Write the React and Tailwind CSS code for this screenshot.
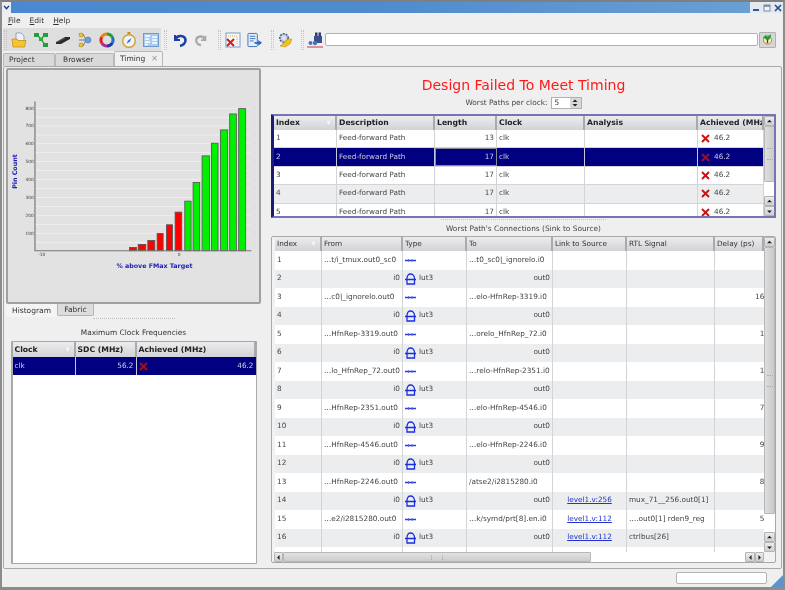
const TOP_COLS = 'grid-cols-[63px_98px_62px_88px_113px_66px]';
const BOT_COLS = 'grid-cols-[47px_81px_64px_86px_74px_88px_49px]';
const LEFT_COLS = 'grid-cols-[63px_61px_119px]';

const WORST = [
  ['1', '13'],
  ['2', '17'],
  ['3', '17'],
  ['4', '17'],
  ['5', '17'],
];

const LINKS = [
  ['1', '…t/i_tmux.out0_sc0', '…t0_sc0|_ignorelo.i0', '', '', ''],
  ['3', '…c0|_ignorelo.out0', '…elo-HfnRep-3319.i0', '', '', '164'],
  ['5', '…HfnRep-3319.out0', '…orelo_HfnRep_72.i0', '', '', '19'],
  ['7', '…lo_HfnRep_72.out0', '…relo-HfnRep-2351.i0', '', '', '13'],
  ['9', '…HfnRep-2351.out0', '…elo-HfnRep-4546.i0', '', '', '78'],
  ['11', '…HfnRep-4546.out0', '…elo-HfnRep-2246.i0', '', '', '95'],
  ['13', '…HfnRep-2246.out0', '/atse2/i2815280.i0', '', '', '83'],
  ['15', '…e2/i2815280.out0', '…k/symd/prt[8].en.i0', 'level1.v:112', '….out0[1]   rden9_reg', '52'],
];

const EVEN_EXTRA = {
  14: ['level1.v:256', 'mux_71__256.out0[1]'],
  16: ['level1.v:112', 'ctrlbus[26]'],
};

const BARS = [
  [389, 410, 548, 'r'], [415, 438, 539, 'r'], [444, 465, 527, 'r'], [472, 490, 506, 'r'],
  [500, 518, 480, 'r'], [526, 546, 442, 'r'], [555, 574, 409, 'g'], [580, 600, 353, 'g'],
  [607, 629, 273, 'g'], [635, 655, 235, 'g'], [662, 684, 195, 'g'], [690, 710, 147, 'g'], [717, 738, 131, 'g'],
];

const YTICKS = [['800', 130], ['700', 183], ['600', 236], ['500', 290], ['400', 344], ['300', 398], ['200', 452], ['100', 506]];

function CrossIcon({ className = 'text-[#d01010]' }) {
  return (
    <svg viewBox="0 0 9 9" className={`h-[9px] w-[9px] shrink-0 ${className}`}>
      <path d="M1 1 L8 8 M8 1 L1 8" stroke="currentColor" strokeWidth="1.9" />
    </svg>
  );
}

function WireIcon() {
  return (
    <svg viewBox="0 0 11 5" className="h-[5px] w-[11px] shrink-0">
      <path d="M0 2.5 H11" stroke="#2a3be0" strokeWidth="1.6" />
      <path d="M3.5 1 V4 M7 1 V4" stroke="#5060e8" strokeWidth="0.8" />
    </svg>
  );
}

function LutIcon() {
  return (
    <svg viewBox="0 0 11 12" className="h-[12px] w-[11px] shrink-0" fill="none">
      <path d="M2 11 H9.5 V5.5 C9.5 2.5 7.5 1 5.5 1 C3.5 1 2 2.5 2 5.5 Z" stroke="#1a2fe0" strokeWidth="1.3" />
      <path d="M0 6.5 H11" stroke="#1a2fe0" strokeWidth="1.3" />
    </svg>
  );
}

function Arrow({ dir, className = 'h-[10px] w-[11px]' }) {
  const d = { up: 'M1.5 6 L5 2.5 L8.5 6 Z', down: 'M1.5 3.5 L5 7 L8.5 3.5 Z', left: 'M6.5 1.5 L3 5 L6.5 8.5 Z', right: 'M3.5 1.5 L7 5 L3.5 8.5 Z' }[dir];
  return (
    <div className={`grid shrink-0 place-items-center rounded-[1px] border border-[#b4b4b4] bg-gradient-to-b from-[#ececec] to-[#cfcfcf] ${className}`}>
      <svg viewBox="0 0 10 10" className="h-[7px] w-[7px]"><path d={d} fill="#222" /></svg>
    </div>
  );
}

function VScroll({ thumb, space }) {
  return (
    <div className="flex w-[12px] shrink-0 flex-col bg-[#f4f4f4]">
      <Arrow dir="up" />
      <div className="flex w-[11px] items-center justify-center rounded-[1px] border border-[#b8b8b8] bg-gradient-to-r from-[#dedede] to-[#cacaca]" style={{ height: thumb }}>
        <div className="h-[12px] w-[6px] border-y border-dotted border-[#aaa]" />
      </div>
      <div className="bg-white" style={{ height: space }} />
      <Arrow dir="up" />
      <Arrow dir="down" />
    </div>
  );
}

function HeaderCell({ children, sort, bold }) {
  return (
    <div className={`flex h-full items-center justify-between overflow-hidden whitespace-nowrap border-r-2 border-[#a9aaad] bg-gradient-to-b from-[#ececee] to-[#d2d3d6] pl-[2px] ${bold ? 'text-[7.7px] font-bold text-[#222]' : 'text-[7.3px] text-[#333]'}`}>
      <span>{children}</span>
      {sort && (
        <svg viewBox="0 0 8 7" className="mr-[3px] h-[6px] w-[7px] shrink-0"><path d="M0 0 H8 L4 7 Z" fill="#f3f3f5" stroke="#c6c6ca" strokeWidth="0.5" /></svg>
      )}
    </div>
  );
}

function Cell({ children, right, selected, className = '' }) {
  return (
    <div className={`flex h-full items-center gap-[2px] overflow-hidden whitespace-nowrap border-r px-[2px] ${right ? 'justify-end' : ''} ${selected ? 'border-[#c8c8dc] text-[#ccccea]' : 'border-[#d3d4d7] text-[#444]'} ${className}`}>
      {children}
    </div>
  );
}

function TopTable() {
  return (
    <div className="flex h-[104px] w-[505px] overflow-hidden rounded-[1px] border-2 border-l-[3px] border-[#7575b5] border-l-[#1c1c78]">
      <div className="flex w-[490px] shrink-0 flex-col">
        <div className={`grid h-[14px] shrink-0 ${TOP_COLS}`}>
          <HeaderCell bold sort>Index</HeaderCell>
          <HeaderCell bold>Description</HeaderCell>
          <HeaderCell bold>Length</HeaderCell>
          <HeaderCell bold>Clock</HeaderCell>
          <HeaderCell bold>Analysis</HeaderCell>
          <HeaderCell bold>Achieved (MHz)</HeaderCell>
        </div>
        {WORST.map(([idx, len], i) => {
          const selected = idx === '2';
          return (
            <div key={idx} className={`grid h-[18.4px] shrink-0 border-b border-[#d3d4d7] text-[7.3px] ${TOP_COLS} ${selected ? 'bg-[#000080]' : i % 2 ? 'bg-[#ecedef]' : 'bg-white'}`}>
              <Cell selected={selected}>{idx}</Cell>
              <Cell selected={selected}>Feed-forward Path</Cell>
              <Cell right selected={selected} className={selected ? 'outline outline-1 -outline-offset-1 outline-[#8a8a9a]' : ''}>{len}</Cell>
              <Cell selected={selected}>clk</Cell>
              <Cell selected={selected} />
              <Cell selected={selected} className="gap-[4px] pl-[3px]">
                <CrossIcon className={selected ? 'text-[#a01020]' : 'text-[#d01010]'} />46.2
              </Cell>
            </div>
          );
        })}
      </div>
      <VScroll thumb={56} space={14} />
    </div>
  );
}

function BottomTable() {
  const rows = [];
  for (let n = 1; n <= 17; n++) {
    if (n % 2) {
      const r = LINKS[(n - 1) / 2];
      rows.push(
        <div key={n} className={`grid h-[18.5px] shrink-0 bg-white ${BOT_COLS}`}>
          <Cell>{r ? r[0] : ''}</Cell>
          <Cell>{r ? r[1] : ''}</Cell>
          <Cell>{r && <WireIcon />}</Cell>
          <Cell>{r ? r[2] : ''}</Cell>
          <Cell className="justify-center">{r && r[3] && <span className="text-[#2233cc] underline">{r[3]}</span>}</Cell>
          <Cell>{r ? r[4] : ''}</Cell>
          <Cell right className="border-r-0"><span className="-mr-[7px]">{r ? r[5] : ''}</span></Cell>
        </div>
      );
    } else {
      const extra = EVEN_EXTRA[n];
      rows.push(
        <div key={n} className={`grid h-[18.5px] shrink-0 bg-[#ecedef] ${BOT_COLS}`}>
          <Cell>{n}</Cell>
          <Cell right>i0</Cell>
          <Cell className="gap-[3px]"><LutIcon />lut3</Cell>
          <Cell right>out0</Cell>
          <Cell className="justify-center">{extra && <span className="text-[#2233cc] underline">{extra[0]}</span>}</Cell>
          <Cell>{extra ? extra[1] : ''}</Cell>
          <Cell right className="border-r-0" />
        </div>
      );
    }
  }
  return (
    <div className="flex h-[327px] w-[505px] flex-col overflow-hidden rounded-[2px] border border-[#a8a8a8] bg-[#f2f2f2] pl-[2px]">
      <div className="flex h-[315px] shrink-0">
        <div className="flex w-[490px] shrink-0 flex-col overflow-hidden pl-[1px]">
          <div className={`grid h-[14px] shrink-0 ${BOT_COLS}`}>
            <HeaderCell sort>Index</HeaderCell>
            <HeaderCell>From</HeaderCell>
            <HeaderCell>Type</HeaderCell>
            <HeaderCell>To</HeaderCell>
            <HeaderCell>Link to Source</HeaderCell>
            <HeaderCell>RTL Signal</HeaderCell>
            <HeaderCell>Delay (ps)</HeaderCell>
          </div>
          <div className="text-[7.3px]">{rows}</div>
        </div>
        <VScroll thumb={267} space={18} />
      </div>
      <div className="flex h-[10px] shrink-0 items-center">
        <Arrow dir="left" className="h-[10px] w-[9px]" />
        <div className="flex h-[10px] w-[308px] items-center justify-center rounded-[1px] border border-[#b8b8b8] bg-gradient-to-b from-[#e2e2e2] to-[#cdcdcd]">
          <div className="h-[5px] w-[12px] border-x border-dotted border-[#aaa]" />
        </div>
        <div className="h-[10px] w-[154px] bg-white" />
        <Arrow dir="left" className="h-[10px] w-[10px]" />
        <Arrow dir="right" className="h-[10px] w-[9px]" />
      </div>
    </div>
  );
}

function Histogram() {
  const ox = -24;
  const oy = 15;
  return (
    <svg viewBox="0 0 760 700" className="h-[233px] w-[253px]">
      {[130, 157, 183, 210, 236, 263, 290, 317, 344, 371, 398, 425, 452, 479, 506, 533].map((y) => (
        <path key={y} d={`M${105 + ox} ${y - oy} H${750 + ox}`} stroke="#eeeeee" strokeWidth="3" />
      ))}
      {BARS.map(([a, b, top, c]) => (
        <rect key={a} x={a + ox} y={top - oy} width={b - a} height={558 - top} fill={c === 'r' ? '#ff0000' : '#00f000'} stroke="#555" strokeWidth="2.5" />
      ))}
      <path d={`M${105 + ox} ${110 - oy} V${558 - oy} H${755 + ox}`} stroke="#777" strokeWidth="3.5" fill="none" />
      {YTICKS.map(([label, y]) => (
        <text key={label} x={101 + ox} y={y - oy + 4} textAnchor="end" fontSize="13" fill="#444" fontFamily="DejaVu Sans">{label}</text>
      ))}
      <text x={115 + ox} y={575 - oy} fontSize="13" fill="#444" fontFamily="DejaVu Sans">-10</text>
      <text x={534 + ox} y={575 - oy} fontSize="13" fill="#444" fontFamily="DejaVu Sans">0</text>
      <text x={464 + ox} y={609 - oy} fontSize="19" fontWeight="bold" textAnchor="middle" fill="#1c1cb0" fontFamily="DejaVu Sans">% above FMax Target</text>
      <text transform={`translate(${50 + ox} ${320 - oy}) rotate(-90)`} fontSize="19" fontWeight="bold" textAnchor="middle" fill="#1c1cb0" fontFamily="DejaVu Sans">Pin Count</text>
    </svg>
  );
}

function ToolIcon({ children, w = 16 }) {
  return <svg viewBox="0 0 16 16" style={{ width: w }} className="h-[16px] shrink-0">{children}</svg>;
}

function Grip({ className = 'mx-[3px]' }) {
  return <div className={`h-[20px] w-[3px] shrink-0 border-x border-dotted border-[#c4c4c4] ${className}`} />;
}

function Toolbar() {
  return (
    <div className="flex h-[23px] shrink-0 items-center pl-[1px] pr-[7px]">
      <div className="flex h-full items-center gap-[6px] bg-[#dedede] pr-[2px]">
        <Grip className="ml-[1px] -mr-[2px]" />
        <ToolIcon>
          <path d="M5 1 H10 L13 4 V9 H5 Z" fill="#eef2ff" stroke="#7a8ab0" strokeWidth="0.7" />
          <path d="M1 7 H6 L7 8.5 H15 L13.5 15 H2 Z" fill="#f6c331" stroke="#c08a10" strokeWidth="0.7" />
        </ToolIcon>
        <ToolIcon>
          <path d="M4 3 L8 7 L12 3 M8 7 L12 13" stroke="#2f7d32" strokeWidth="1.2" fill="none" />
          <rect x="1" y="1" width="5" height="4" fill="#1fa03a" />
          <rect x="10" y="1" width="5" height="4" fill="#1fa03a" />
          <rect x="6" y="6" width="4" height="3" fill="#23b040" />
          <rect x="10" y="11" width="5" height="4" fill="#1fa03a" />
        </ToolIcon>
        <ToolIcon>
          <path d="M1 10 L10 5 H15 V7 L6 12 H1 Z" fill="#2b2b2b" />
          <path d="M2 10 L10 6" stroke="#777" strokeWidth="0.6" />
        </ToolIcon>
        <ToolIcon>
          <path d="M2 2 H6 L9 8 H14 M2 8 H9 M2 14 H6 L9 8" stroke="#777" strokeWidth="1" fill="none" />
          <circle cx="4" cy="3" r="2" fill="#f2c230" stroke="#a07c10" strokeWidth="0.5" />
          <circle cx="4" cy="13" r="2" fill="#f2c230" stroke="#a07c10" strokeWidth="0.5" />
          <circle cx="11" cy="8" r="3" fill="#6c9fd8" stroke="#40689c" strokeWidth="0.5" />
        </ToolIcon>
        <ToolIcon>
          <g fill="none" strokeWidth="3">
            <path d="M8 2 A6 6 0 0 1 13.2 5" stroke="#1fa03a" />
            <path d="M13.2 5 A6 6 0 0 1 13.2 11" stroke="#1f6fc0" />
            <path d="M13.2 11 A6 6 0 0 1 8 14" stroke="#2233aa" />
            <path d="M8 14 A6 6 0 0 1 2.8 11" stroke="#a030a0" />
            <path d="M2.8 11 A6 6 0 0 1 2.8 5" stroke="#e02020" />
            <path d="M2.8 5 A6 6 0 0 1 8 2" stroke="#e08a10" />
          </g>
        </ToolIcon>
        <ToolIcon>
          <rect x="6.5" y="0" width="3" height="2" fill="#c09020" />
          <circle cx="8" cy="9" r="6.3" fill="#eef3fb" stroke="#d6a526" strokeWidth="1.5" />
          <path d="M10.5 6 L7 8.5 L5.5 12 L9 9.5 Z" fill="#3b78c4" />
        </ToolIcon>
        <ToolIcon>
          <rect x="0.5" y="1.5" width="15" height="13" fill="#a9cbef" stroke="#6d9bd0" />
          <path d="M2 4 H7 M2 7 H6 M2 10 H7 M2 12.5 H5 M9 5 H14 M9 8 H14 M9 11 H14" stroke="#fff" strokeWidth="1.3" />
        </ToolIcon>
      </div>
      <Grip />
      <div className="ml-[2px] flex items-center gap-[6px]">
        <ToolIcon>
          <path d="M3 3 V8 H8" stroke="#1c3fa8" strokeWidth="2" fill="none" />
          <path d="M3.5 7.5 C5 2.5 13 3 13.5 8 C13.8 11 11 13.5 8 14" stroke="#1c3fa8" strokeWidth="2.6" fill="none" />
        </ToolIcon>
        <ToolIcon w={14}>
          <path d="M13 3 V8 H8" stroke="#a8a8a8" strokeWidth="2" fill="none" />
          <path d="M12.5 7.5 C11 2.5 3 3 2.5 8 C2.2 11 5 13.5 8 14" stroke="#a8a8a8" strokeWidth="2.6" fill="none" />
        </ToolIcon>
      </div>
      <div className="w-[7px]" />
      <Grip />
      <div className="ml-[1px] flex items-center gap-[6px]">
        <ToolIcon>
          <rect x="1" y="1" width="14" height="14" fill="#f6f8fc" stroke="#7a9cc8" />
          <path d="M3 4 H13" stroke="#d8b030" strokeDasharray="1 1" />
          <path d="M12 5 V13" stroke="#d8b030" strokeDasharray="1 1" />
          <path d="M2 7 L9 14 M9 7 L2 14" stroke="#e01818" strokeWidth="2" />
        </ToolIcon>
        <ToolIcon w={15}>
          <rect x="1" y="1" width="10" height="14" rx="1" fill="#e6effa" stroke="#3a70b8" />
          <path d="M3 4 H9 M3 6.5 H9 M3 9 H7" stroke="#3a70b8" />
          <path d="M8 10 H12 V8 L16 11 L12 14 V12 H8 Z" fill="#2f68c0" />
        </ToolIcon>
      </div>
      <div className="w-[6px]" />
      <Grip />
      <ToolIcon>
        <circle cx="7" cy="6" r="4.2" fill="#c9d4e6" stroke="#4a5f86" strokeWidth="1.6" strokeDasharray="2 1" />
        <circle cx="7" cy="6" r="1.5" fill="#eef" />
        <path d="M3 14 L11 7 H15 L13 12 L8 15 Z" fill="#f4c21f" stroke="#b98a08" strokeWidth="0.5" />
      </ToolIcon>
      <div className="w-[5px]" />
      <Grip />
      <ToolIcon>
        <rect x="8" y="0.5" width="2.5" height="4" fill="#2c3f70" />
        <rect x="11.5" y="0.5" width="2.5" height="4" fill="#2c3f70" />
        <rect x="7" y="4" width="8" height="7" fill="#3b4f88" />
        <circle cx="3.5" cy="11" r="2" fill="#3a78c8" />
        <circle cx="8" cy="11" r="2.2" fill="#3a78c8" />
        <path d="M0 15 H16" stroke="#e07070" strokeWidth="1.5" />
      </ToolIcon>
      <input readOnly className="mb-[1px] ml-[2px] h-[13px] min-w-0 flex-1 rounded-[2px] border border-[#b0b0b0] bg-white outline-none" />
      <div className="ml-[1px] grid h-[16px] w-[17px] shrink-0 place-items-center rounded-[1px] border border-[#b0b0b0] bg-[#d6d6d6]">
        <svg viewBox="0 0 12 12" className="h-[11px] w-[11px]">
          <circle cx="6" cy="6.5" r="4.5" fill="#f4ecd0" stroke="#c09a30" strokeWidth="1.2" />
          <path d="M1 4 L4 1 L6 3 L10 0 L9 5 L6 7 L3 5 Z" fill="#20a030" />
          <path d="M6 6 V10" stroke="#444" strokeWidth="1.5" />
        </svg>
      </div>
    </div>
  );
}

function TitleBar() {
  return (
    <div className="flex h-[11px] shrink-0 items-stretch">
      <div className="grid w-[9px] place-items-center bg-[#e9eef5]">
        <svg viewBox="0 0 8 6" className="h-[5px] w-[7px]"><path d="M1 1 L4 4.5 L7 1" stroke="#16306c" strokeWidth="1.5" fill="none" /></svg>
      </div>
      <div className="flex-1 bg-gradient-to-r from-[#4a88d0] via-[#4f8bce] to-[#6a9fd3]" />
      <div className="flex w-[33px] items-center justify-around bg-[#e4e9f0]">
        <svg viewBox="0 0 8 8" className="h-[8px] w-[8px]"><path d="M1 6 H7" stroke="#2a5a9c" strokeWidth="2" /></svg>
        <svg viewBox="0 0 8 8" className="h-[8px] w-[8px]"><rect x="1" y="1" width="6" height="6" fill="#f2f4f7" stroke="#7a8ca4" /><path d="M1 2 H7" stroke="#5f7a9c" strokeWidth="1.4" /></svg>
        <svg viewBox="0 0 8 8" className="h-[8px] w-[8px]"><path d="M1 1 L7 7 M7 1 L1 7" stroke="#24508e" strokeWidth="1.7" /></svg>
      </div>
    </div>
  );
}

export default function App() {
  return (
    <div className="flex h-[590px] w-[785px] flex-col overflow-hidden border-x-2 border-t-2 border-b-[3px] border-x-[#8c8c8c] border-t-[#7f7f7f] border-b-[#8c8c8c] bg-[#efefef] font-['DejaVu_Sans',sans-serif] text-[#333] blur-[0.6px]">
      <TitleBar />

      {/* Menu */}
      <div className="flex h-[15px] shrink-0 items-center gap-[9px] pl-[6px] text-[7.5px] text-[#333]">
        <span><u>F</u>ile</span>
        <span><u>E</u>dit</span>
        <span><u>H</u>elp</span>
      </div>

      <Toolbar />

      {/* Tabs */}
      <div className="flex h-[15px] shrink-0 items-end pl-[1px] text-[7.5px]">
        <div className="flex h-[13px] w-[52px] items-center rounded-t-[2px] border border-b-0 border-[#b8b8b8] bg-[#d9d9d9] pl-[5px]">Project</div>
        <div className="flex h-[13px] w-[59px] items-center rounded-t-[2px] border border-b-0 border-[#b8b8b8] bg-[#d9d9d9] pl-[7px]">Browser</div>
        <div className="flex h-[15px] w-[49px] items-center gap-[6px] rounded-t-[2px] border border-b-0 border-[#b8b8b8] bg-[#f0f0f0] pl-[5px]">
          Timing
          <span className="text-[8px] leading-none text-[#999]">✕</span>
        </div>
      </div>

      {/* Tab pane */}
      <div className="mx-[1px] flex h-[503px] shrink-0 gap-[10px] rounded-[2px] border border-[#a8a8a8] pl-[2px] pt-[1px]">
        <div className="flex w-[255px] shrink-0 flex-col">
          <div className="h-[236px] shrink-0 rounded-[2px] border-2 border-[#a0a0a0] bg-[#e2e2e2]">
            <Histogram />
          </div>
          <div className="flex h-[13px] shrink-0 items-start text-[7.5px]">
            <div className="flex h-[13px] w-[51px] items-center justify-center rounded-b-[2px] bg-[#f4f4f4]">Histogram</div>
            <div className="flex h-[12px] w-[37px] items-center justify-center rounded-b-[2px] border border-t-0 border-[#b4b4b4] bg-[#dcdcdc]">Fabric</div>
          </div>
          <div className="flex h-[247px] shrink-0 flex-col items-center">
            <div className="mt-[1px] h-[1px] w-[82px] border-t border-dotted border-[#bdbdbd]" />
            <p className="mb-[2px] mt-[8px] text-[7.4px] leading-[12px] text-[#333]">Maximum Clock Frequencies</p>
            <div className="flex w-[246px] flex-1 flex-col rounded-[1px] border border-l-2 border-[#a8a8a8] bg-white">
              <div className={`grid h-[15px] shrink-0 ${LEFT_COLS}`}>
                <HeaderCell bold sort>Clock</HeaderCell>
                <HeaderCell bold>SDC (MHz)</HeaderCell>
                <HeaderCell bold>Achieved (MHz)</HeaderCell>
              </div>
              <div className={`grid h-[18px] shrink-0 bg-[#000080] text-[7.3px] ${LEFT_COLS}`}>
                <Cell selected>clk</Cell>
                <Cell selected right>56.2</Cell>
                <Cell selected className="justify-between border-r-0">
                  <CrossIcon className="text-[#a01020]" /><span>46.2</span>
                </Cell>
              </div>
            </div>
          </div>
        </div>

        <div className="flex w-[505px] flex-col">
          <h1 className="mt-[8px] h-[19px] text-center text-[14px] leading-[19px] text-[#ff1a1a]">Design Failed To Meet Timing</h1>
          <div className="mt-[1px] flex h-[13px] items-center justify-center gap-[3px] text-[7.4px] text-[#444]">
            <span>Worst Paths per clock:</span>
            <div className="flex h-[12px] w-[31px] items-stretch border border-[#b0b0b0] bg-white">
              <span className="flex-1 pl-[3px] leading-[10px]">5</span>
              <div className="flex w-[11px] flex-col justify-center bg-[#d8d8d8]">
                <svg viewBox="0 0 8 10" className="h-[10px] w-[10px]"><path d="M1.5 4 L4 1.5 L6.5 4 Z M1.5 6 L4 8.5 L6.5 6 Z" fill="#222" /></svg>
              </div>
            </div>
          </div>
          <div className="mt-[5px]"><TopTable /></div>
          <div className="mx-auto mt-[1px] h-[1px] w-[165px] border-t border-dotted border-[#c4c4c4]" />
          <p className="mt-[3px] h-[13px] text-center text-[7.4px] leading-[11px] text-[#444]">Worst Path's Connections (Sink to Source)</p>
          <BottomTable />
        </div>
      </div>

      {/* Status bar */}
      <div className="relative flex flex-1 items-center justify-end pr-[16px]">
        <div className="h-[12px] w-[91px] rounded-[2px] border border-[#b4b4b4] bg-white" />
        <svg viewBox="0 0 12 12" className="absolute bottom-0 right-0 h-[12px] w-[12px]">
          <path d="M12 0 V12 H0 Z" fill="#5f92cc" />
        </svg>
      </div>
    </div>
  );
}
